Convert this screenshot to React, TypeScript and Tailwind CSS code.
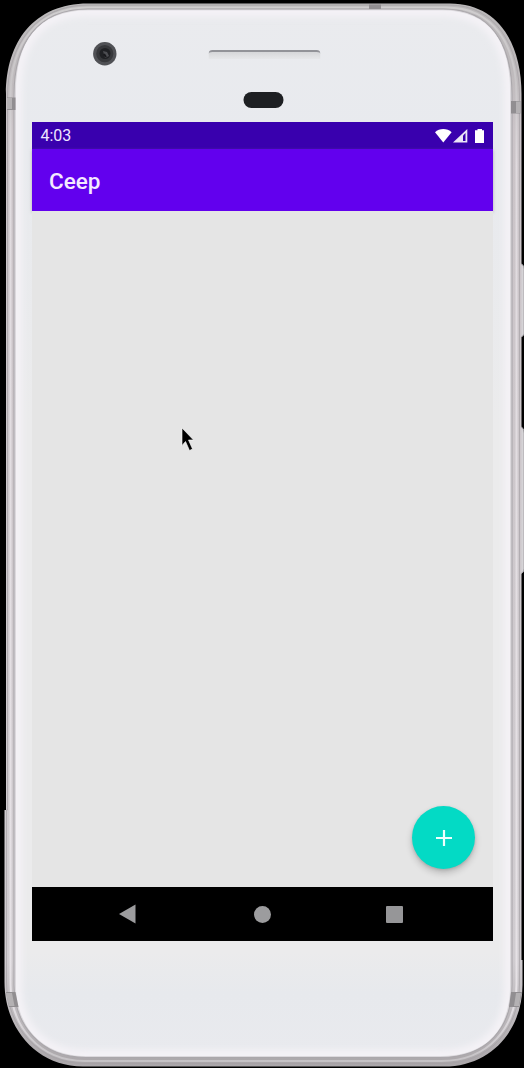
function PhoneBody() {
  return (
    <svg className="absolute inset-0" width="524" height="1068" viewBox="0 0 524 1068" fill="none" aria-hidden="true">
      <defs>
        <linearGradient id="face" x1="0" y1="0" x2="0" y2="1">
          <stop offset="0" stopColor="#eaebee" />
          <stop offset=".12" stopColor="#e8eaee" />
          <stop offset=".4" stopColor="#ebebec" />
          <stop offset=".9" stopColor="#ebebec" />
          <stop offset=".94" stopColor="#e7e9ed" />
          <stop offset="1" stopColor="#e9eaee" />
        </linearGradient>
        <linearGradient id="metal" x1="0" y1="0" x2="0" y2="1">
          <stop offset="0" stopColor="#bab8b9" />
          <stop offset=".06" stopColor="#bdb9bb" />
          <stop offset=".12" stopColor="#cbc4c8" />
          <stop offset=".9" stopColor="#d0ccd0" />
          <stop offset="1" stopColor="#aaa6a9" />
        </linearGradient>
        <linearGradient id="shine" x1="0" y1="0" x2="0" y2="1">
          <stop offset="0" stopColor="#cfcdce" />
          <stop offset=".07" stopColor="#c9c6c8" />
          <stop offset=".15" stopColor="#e0dbdf" />
          <stop offset=".94" stopColor="#e6e2e6" />
          <stop offset="1" stopColor="#c5c2c5" />
        </linearGradient>
        <filter id="soften" x="-5%" y="-5%" width="110%" height="110%">
          <feGaussianBlur stdDeviation="3" />
        </filter>
        <clipPath id="faceClip">
          <path d="M16 92C16 42 38 10.500 88 10.500H442C490 10.500 510 42 510 92V985C510 1028 488 1056 440 1056H86C40 1056 16 1024 16 985Z" />
        </clipPath>
      </defs>
      <path d="M520 264q4 0 4 5V334q-1 3-4 3ZM520 427q4 0 4 6V569q0 4-4 5Z" fill="#d5d3d6" stroke="#a6a3a8" />
      <path d="M6 94C6 42 34 3.500 88 3.500H450C498 3.500 521.500 43 521.500 94V960H522.500V985C522.500 1029 492 1066.500 444 1066.500H83C36 1066.500 4.500 1028 4.500 982V810H6Z" fill="url(#metal)" />
      <path d="M7.500 96C7.500 46 35 5 88 5H449C496 5 519.500 46 519.500 96V984C519.500 1027 491 1063.500 443 1063.500H84C39 1063.500 6.500 1027 6.500 982V810H7.500Z" stroke="#a5a1a5" strokeWidth=".7" />
      <path d="M10.500 96C10.500 43 38 7.500 88 7.500H446C494 7.500 516.500 45 516.500 96V984C516.500 1027 489 1061 441 1061H85C38 1061 10.500 1025 10.500 984Z" stroke="url(#shine)" strokeWidth="2" />
      <path d="M14 95C14 44 37 9 88 9H443C491 9 512 44 512 95V985C512 1027 488 1057.500 440 1057.500H86C40 1057.500 14 1024 14 985Z" fill="#dcd9dd" stroke="#aaa7ab" strokeWidth="1.100" />
      <path d="M16 92C16 42 38 10.500 88 10.500H442C490 10.500 510 42 510 92V985C510 1028 488 1056 440 1056H86C40 1056 16 1024 16 985Z" fill="url(#face)" />
      <g clipPath="url(#faceClip)">
        <path d="M16 92C16 42 38 10.500 88 10.500H442C490 10.500 510 42 510 92V985C510 1028 488 1056 440 1056H86C40 1056 16 1024 16 985Z" stroke="#f4f2f6" strokeWidth="12" filter="url(#soften)" />
      </g>
      <path d="M7 97.500H15.500V110H7ZM511 101H520.500V113.500H511ZM369 4.500H381V9H369ZM6 992H15.500L18.500 1007H9ZM511 992H522L519 1007H509Z" fill="#918e91" />
      <path d="M7 98H12V109H7ZM516 101.500H520.500V113H516ZM6 993H12L14.500 1006H9ZM516 993H521L519 1006H514Z" fill="#b4b1b3" />

      <circle cx="104.800" cy="53.700" r="11.700" fill="#505155" />
      <circle cx="104.800" cy="53.700" r="8.600" fill="#37383b" />
      <circle cx="105" cy="53.500" r="5.500" fill="#202124" />
      <path d="M103 51l4 1 2 4-4 2Z" fill="#4d4e52" />
      <path d="M104 54l2 3" stroke="#19191c" strokeWidth="2" />
    </svg>
  )
}

function StatusIcons() {
  return (
    <svg className="shrink-0" width="50" height="16" viewBox="0 0 50 16" aria-hidden="true">
      <path d="M0 4.200C4.300-.2 12.300-.2 16.600 4.200L8.300 14.500Z" fill="#fff" />
      <path d="M18 14.500 32.300 1V14.500Z" fill="#fff" opacity=".9" />
      <path d="M28 7.500 30.500 5V13H28Z" fill="#3900ae" />
      <path d="M42.500 1H47V2.300H49V15H40V2.300H42.500Z" fill="#fff" />
    </svg>
  )
}

export default function App() {
  return (
    <main className="relative h-[1068px] w-[524px] overflow-hidden bg-black font-['Roboto',sans-serif]">
      <PhoneBody />
      <div className="relative flex h-full flex-col pl-8 pr-[31px]">
        <header className="flex h-[122px] shrink-0 flex-col items-center pt-[50px]">
          <div className="h-[9px] w-[112px] translate-x-[1.5px] rounded-t-[4px] border-t-2 border-[#929398] bg-linear-to-b from-[#d6d7d9] to-[#e6e7e9]" />
          <div className="mt-[33px] h-[16px] w-[40px] translate-x-[0.5px] rounded-full bg-[#1d1f22]" />
        </header>
        <section className="flex h-[819px] w-[461px] shrink-0 flex-col">
          <div className="flex h-[27px] shrink-0 items-center justify-between bg-[#3900ae] pl-[8.5px] pr-2 text-[16px] text-[#eee6ff]">
            <span className="pt-px leading-[26px]">4:03</span>
            <StatusIcons />
          </div>
          <div className="relative flex h-[62px] shrink-0 items-center bg-[#6200ee] pl-[17px] pb-px shadow-[0_1px_3px_#77777780]">
            <h1 className="pt-[4px] text-[22.5px] font-medium leading-none text-[#f3e9ff]">Ceep</h1>
          </div>
          <div className="relative flex flex-1 items-end justify-end bg-[#e5e5e5] pr-[18px] pb-[18px]">
            <svg className="absolute left-[149px] top-[216px]" width="16" height="28" viewBox="0 0 16 28" aria-hidden="true">
              <path d="M1 1V18.500L4.500 14.500 8.500 23.500 11.500 22 7.500 13H12.500Z" fill="#000" stroke="#fff" strokeWidth=".6" />
            </svg>
            <button className="flex size-[63px] items-center justify-center rounded-full bg-[#03dac5] shadow-[0_4px_7px_#00000033,0_1px_3px_#00000020]" aria-label="Add">
              <svg width="18" height="18" viewBox="0 0 18 18" aria-hidden="true">
                <path d="M9 1V17M1 9H17" stroke="#effffd" strokeWidth="2.200" />
              </svg>
            </button>
          </div>
          <nav className="flex h-[54px] shrink-0 items-center bg-black pl-[87px]">
            <svg width="17" height="20" viewBox="0 0 17 20" aria-hidden="true">
              <path d="M0 10 16.500 .5V19.500Z" fill="#9c9c9e" />
            </svg>
            <div className="ml-[117.500px] size-[17px] rounded-full bg-[#9c9c9e]" />
            <div className="ml-[115.500px] size-[17px] rounded-[1px] bg-[#969698]" />
          </nav>
        </section>
      </div>
    </main>
  )
}
